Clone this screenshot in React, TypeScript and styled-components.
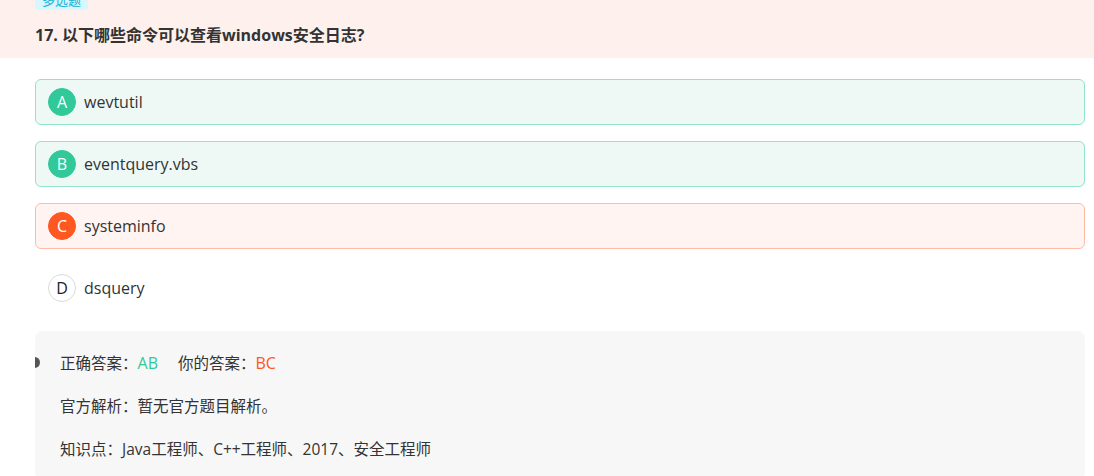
import { createGlobalStyle, styled } from "styled-components"

const GlobalStyle = createGlobalStyle`
  html, body {
    margin: 0;
    padding: 0;
    background: #fff;
    overflow: hidden;
  }
  body {
    font-family: "Segoe UI", "Open Sans", "Noto Sans CJK SC", sans-serif;
    color: #333;
  }
`

type OptionState = 'right' | 'wrong' | 'none'

interface IOption {
  key: string
  text: string
  state: OptionState
}

const options: IOption[] = [
  { key: 'A', text: 'wevtutil', state: 'right' },
  { key: 'B', text: 'eventquery.vbs', state: 'right' },
  { key: 'C', text: 'systeminfo', state: 'wrong' },
  { key: 'D', text: 'dsquery', state: 'none' },
]

const palette = {
  right: { border: '#93e3c8', bg: '#eef9f6', dot: '#31c999', dotText: '#fff', dotBorder: '#31c999' },
  wrong: { border: '#ffbba3', bg: '#fff4f1', dot: '#ff5720', dotText: '#fff', dotBorder: '#ff5720' },
  none: { border: 'transparent', bg: 'transparent', dot: '#fff', dotText: '#222', dotBorder: '#dcdcdc' },
}

const Page = styled.div`
  width: 1094px;
`

const Header = styled.div`
  display: flex;
  flex-direction: column;
  align-items: flex-start;
  background: #fef1ed;
  padding: 0 35px 12px;
`

const Tag = styled.div`
  margin-top: -10px;
  height: 20px;
  line-height: 20px;
  padding: 0 7px;
  border-radius: 4px;
  background: #d8f6fb;
  color: #18b2d6;
  font-size: 13px;
`

const Title = styled.h2`
  margin: 14px 0 0;
  font-size: 16px;
  line-height: 22px;
  font-weight: 700;
  color: #333;
`

const Body = styled.div`
  padding: 21px 9px 0 35px;
`

const OptionList = styled.div`
  display: flex;
  flex-direction: column;
  gap: 16px;
`

const OptionRow = styled.div<{ $state: OptionState }>`
  display: flex;
  align-items: center;
  gap: 8px;
  height: 46px;
  box-sizing: border-box;
  padding: 0 12px;
  border: 1px solid ${p => palette[p.$state].border};
  background: ${p => palette[p.$state].bg};
  border-radius: 6px;
`

const OptionKey = styled.span<{ $state: OptionState }>`
  display: flex;
  align-items: center;
  justify-content: center;
  width: 28px;
  height: 28px;
  box-sizing: border-box;
  border-radius: 50%;
  border: 1px solid ${p => palette[p.$state].dotBorder};
  background: ${p => palette[p.$state].dot};
  color: ${p => palette[p.$state].dotText};
  font-size: 16px;
`

const OptionText = styled.span`
  font-size: 16px;
  color: #333;
`

const Analysis = styled.div`
  position: relative;
  overflow: hidden;
  margin-top: 20px;
  padding: 21px 25px 20px;
  background: #f7f7f7;
  border-radius: 8px;
  display: flex;
  flex-direction: column;
  gap: 21px;

  &::before {
    content: "";
    position: absolute;
    left: -6px;
    top: 26px;
    width: 11px;
    height: 11px;
    border-radius: 50%;
    background: #555;
  }
`

const Line = styled.div`
  font-size: 15.5px;
  line-height: 22px;
  color: #333;
`

const Answer = styled.span<{ $color: string }>`
  color: ${p => p.$color};
  font-size: 16px;
  margin-right: 20px;
`

const App = () => {
  return (
    <Page>
      <GlobalStyle />
      <Header>
        <Tag>多选题</Tag>
        <Title>17. 以下哪些命令可以查看windows安全日志?</Title>
      </Header>
      <Body>
        <OptionList>
          {options.map(item => (
            <OptionRow key={item.key} $state={item.state}>
              <OptionKey $state={item.state}>{item.key}</OptionKey>
              <OptionText>{item.text}</OptionText>
            </OptionRow>
          ))}
        </OptionList>
        <Analysis>
          <Line>
            正确答案：<Answer $color="#31c999">AB</Answer>
            你的答案：<Answer $color="#ff5720">BC</Answer>
          </Line>
          <Line>官方解析：暂无官方题目解析。</Line>
          <Line>知识点：Java工程师、C++工程师、2017、安全工程师</Line>
        </Analysis>
      </Body>
    </Page>
  )
}

export default App
